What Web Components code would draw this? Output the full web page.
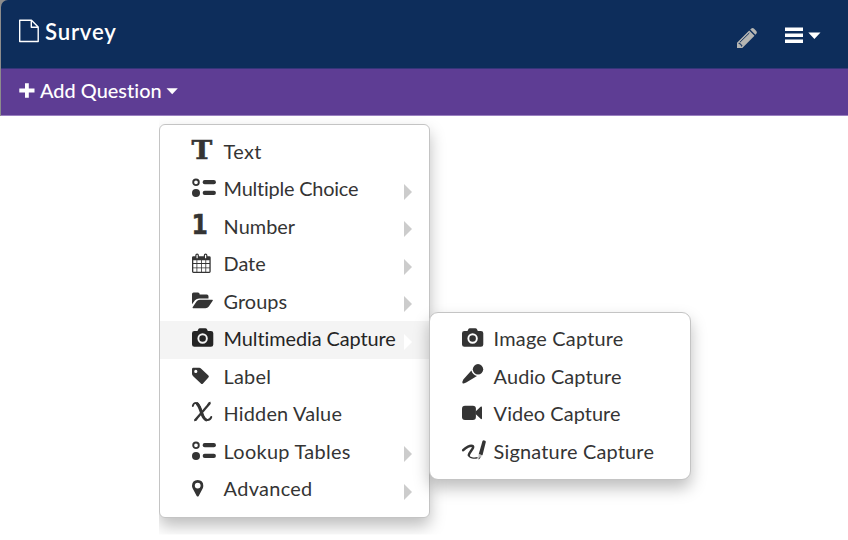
<!DOCTYPE html>
<html lang="en">
<head>
<meta charset="utf-8">
<title>Survey</title>
<style>
html,body{margin:0;height:100%;overflow:hidden;background:#fff}
body{font-family:Lato,"Open Sans",sans-serif;color:#343434}
</style>
</head>
<body>
<form-builder></form-builder>
<script>
const define = (name, html, setup) => {
  const t = document.createElement('template');
  t.innerHTML = html;
  customElements.define(name, class extends HTMLElement {
    connectedCallback() {
      if (this.shadowRoot) return;
      this.attachShadow({mode: 'open'}).append(t.content.cloneNode(true));
      if (setup) setup(this, this.shadowRoot);
    }
  });
};

const icons = {
  text: '<text x="-.4" y="25.3" font-family="DejaVu Serif" font-weight="700" font-size="26.5" stroke="currentColor" stroke-width=".5" textLength="20.8" lengthAdjust="spacingAndGlyphs">T</text>',
  one: '<text x="-.6" y="25.2" font-family="DejaVu Sans" font-weight="700" font-size="26.3" stroke="currentColor" stroke-width=".5" textLength="16.4" lengthAdjust="spacingAndGlyphs">1</text>',
  list: '<circle cx="4" cy="11.3" r="2.8" fill="none" stroke="currentColor" stroke-width="1.9"/><circle cx="4" cy="22" r="4"/><rect x="10.7" y="9" width="13.2" height="4.2" rx="2"/><rect x="10.7" y="19.8" width="13.2" height="4.2" rx="2"/>',
  date: '<path fill-rule="evenodd" d="M1.4 10.2H17.3Q18.7 10.2 18.7 11.6V25.6Q18.7 27 17.3 27H1.4Q0 27 0 25.6V11.6Q0 10.2 1.4 10.2ZM1.3 14.2V17.1H4.5V14.2ZM5.3 14.2V17.1H9V14.2ZM9.8 14.2V17.1H13.4V14.2ZM14.2 14.2V17.1H17.4V14.2ZM1.3 17.9V21.4H4.5V17.9ZM5.3 17.9V21.4H9V17.9ZM9.8 17.9V21.4H13.4V17.9ZM14.2 17.9V21.4H17.4V17.9ZM1.3 22.2V25.7H4.5V22.2ZM5.3 22.2V25.7H9V22.2ZM9.8 22.2V25.7H13.4V22.2ZM14.2 22.2V25.7H17.4V22.2Z"/><path d="M5.1 9.2V11.8M13.6 9.2V11.8" stroke="currentColor" stroke-width="3.6" stroke-linecap="round"/><path d="M5.1 9.3V11.7M13.6 9.3V11.7" stroke="#fff" stroke-width="1.2" stroke-linecap="round"/>',
  folder: '<path d="M0 22V10.1Q0 8.5 1.6 8.5H6Q7.6 8.5 7.6 10.1V10.6H14.8Q16.5 10.6 16.5 12.2V14.4H7.2Q4.7 14.4 3 16.3L0 20.3Z"/><path d="M1 24.2Q.1 24.1.8 23.1L4.5 17.6Q5.7 15.7 7.9 15.7H20.2Q21.3 15.8 20.7 16.8L16.8 22.4Q15.6 24.2 13.4 24.2Z"/>',
  camera: '<path fill-rule="evenodd" d="M2.4 9.9H5.5L6.2 8.4Q6.7 7.3 8 7.3H13.3Q14.6 7.3 15.1 8.4L15.8 9.9H18.9Q21.3 9.9 21.3 12.3V23.4Q21.3 25.7 18.9 25.7H2.4Q0 25.7 0 23.4V12.3Q0 9.9 2.4 9.9ZM10.6 12.3A5.2 5.2 0 1 0 10.6 22.7A5.2 5.2 0 1 0 10.6 12.3ZM10.6 14.2A3.3 3.3 0 1 1 10.6 20.8A3.3 3.3 0 1 1 10.6 14.2Z"/>',
  tag: '<path fill-rule="evenodd" d="M1.4 8.8H7.2Q8.3 8.8 9.2 9.7L16.4 16.5Q17.4 17.5 16.4 18.6L11 24.5Q10 25.6 8.9 24.5L1.2 17.3Q0 16.1 0 15V10.2Q0 8.8 1.4 8.8ZM3.8 10.8A1.6 1.6 0 1 0 3.8 14A1.6 1.6 0 1 0 3.8 10.8Z"/>',
  chi: '<path d="M.8 10Q1.4 6.9 4.1 6.9C7.2 7 8.3 12 9.7 16C11 20 12.4 24 15.2 24Q18.3 24.2 19.3 20.9" fill="none" stroke="currentColor" stroke-width="1.9" stroke-linecap="round"/><path d="M4.5 7.4C7.4 9 8.4 13.8 9.6 17C11 21 12.6 24 14.9 24" fill="none" stroke="currentColor" stroke-width="3"/><path d="M18 6.9L3.1 24.2" stroke="currentColor" stroke-width="2.3"/><path d="M14.9 10.4Q15.4 5.7 18.6 5.7L18.5 7.7Q17 7.6 14.9 10.4ZM6 20.7Q5.5 25.3 2 25.3L2.5 23.2Q4.6 23 6 20.7Z"/>',
  pin: '<path fill-rule="evenodd" d="M5.7 9Q11.3 9.3 11.3 14.7Q11.3 16.1 10.8 17.2L6.7 25Q5.7 26.2 4.7 25L.6 17.2Q0 16.1 0 14.7Q.2 9.3 5.7 9ZM5.7 11.7A2.9 2.9 0 1 0 5.7 17.5A2.9 2.9 0 1 0 5.7 11.7Z"/>',
  mic: '<circle cx="16" cy="10.3" r="5.2"/><path d="M9.4 11.6Q10.6 16 15 17L4.2 23.6L1.7 24.6Q.2 24.7.3 23.1L1.3 20.5Z"/>',
  video: '<rect y="9.7" width="13.9" height="14.2" rx="3"/><path d="M13.6 15.6L18.6 10.8Q20 9.9 20 11.4V22.2Q20 23.7 18.6 22.8L13.6 18Z"/>',
  sign: '<path d="M1.2 16.2C4 13.1 8.3 11.3 10.3 12C13.4 13.4 7 18 6.8 21.2" fill="none" stroke="currentColor" stroke-width="2.5" stroke-linecap="round"/><path d="M6.8 21C7 24.2 12.4 24.7 15.6 23.7" fill="none" stroke="currentColor" stroke-width="1.3"/><path d="M20.5 7.1Q21 6.1 22.4 6.4Q24 6.8 23.8 7.9L20.5 21.2L16.7 20.3Z"/><path d="M16.7 20.3L20.2 21.2L17.4 25.2L16.2 24.7Z" fill="#bbb"/><path d="M16.6 24.9L18.3 23.5" stroke="currentColor"/>'
};

/* A text whose tracking is set so that it takes the width given in its attribute */
define('fit-label', `<style>
:host{display:block;white-space:nowrap}
span{display:inline-block}
</style><span><slot></slot></span>`, (el, root) => {
  const s = root.querySelector('span');
  s.style.letterSpacing = (el.getAttribute('width') - s.getBoundingClientRect().width) / el.textContent.length + 'px';
});

define('menu-item', `<style>
:host{display:flex;height:37.5px;padding:0 17px 0 32px;box-sizing:border-box;font-size:19.9px;line-height:34px}
:host([active]){background:#f4f4f4;color:#242424}
svg{width:31.6px;height:37.5px;flex:none;overflow:visible;fill:currentColor}
i{display:none;margin:12.6px 0 0 auto;width:0;height:0;border:8px solid transparent;border-left-color:#ccc;border-right:0}
:host([sub]) i{display:block}
:host([active]) i{border-left-color:#fff}
</style><svg viewBox="0 0 31.6 37.5"></svg><fit-label></fit-label><i></i>`, (el, root) => {
  root.querySelector('svg').innerHTML = icons[el.getAttribute('icon')];
  const label = document.createElement('fit-label');
  label.setAttribute('width', el.getAttribute('width'));
  label.textContent = el.getAttribute('label');
  root.querySelector('fit-label').replaceWith(label);
});
const item = (icon, label, width, flags = '') => `<menu-item icon="${icon}" label="${label}" width="${width}" ${flags}></menu-item>`;

define('menu-panel', `<style>
:host{display:block;box-sizing:border-box;background:#fff;border:1px solid #c4c4c4;padding:8.5px 0;border-radius:6px;box-shadow:0 8px 16px rgba(0,0,0,.26)}
</style><slot></slot>`);

define('title-bar', `<style>
:host{display:flex;height:69px;box-sizing:border-box;padding:0 28px 0 17px;background:#0d2d5b;color:#fff;font-size:22.2px;font-weight:600;line-height:64px;border-top-left-radius:7px;border-bottom:1px solid #35357a}
.file{width:27px}.pen{width:48px;margin-left:auto}.bars{width:36px}
svg{height:67px;flex:none;overflow:visible}
</style>
<svg class="file" viewBox="0 0 27 67"><path d="M1.7 20.3H13.5L20.2 27V41.5H1.7ZM13.3 20.5V27.2H20" fill="none" stroke="#fff" stroke-width="1.4" stroke-linejoin="round"/></svg>
<fit-label width="71.5">Survey</fit-label>
<svg class="pen" viewBox="736 0 48 67"><path fill="#b5b5b2" d="M737 42.7L749.2 30.5L754.5 35.8L742.3 48H737ZM750.2 29.5L751.4 28.4Q752.7 27.6 753.9 28.6L756.5 31.2Q757.3 32.4 756.5 33.6L755.4 34.8Z"/><path d="M740 42.2L749.3 33M738.6 43.4L740 43.2L740.3 44.8L741.9 45L741.5 46.5" fill="none" stroke="#0d2d5b" stroke-width="1"/></svg>
<svg class="bars" viewBox="784 0 36 67"><path fill="#fff" d="M785 27.6H803V30.9H785ZM785 33.6H803V36.9H785ZM785 39.6H803V42.9H785ZM808.3 32.4H820.5L814.4 39.1Z"/></svg>`);

define('tool-bar', `<style>
:host{display:flex;height:47px;box-sizing:border-box;padding-left:17px;background:#5e3d94;color:#fff;font-size:19.9px;font-weight:500;line-height:43px;border-bottom:1px solid #9a80c0}
svg{height:46px;flex:none;overflow:visible;fill:#fff}
.plus{width:22px}.caret{width:20px}
</style>
<svg class="plus" viewBox="18 69 22 46"><path d="M25 83.2H28.8V88.5H34.5V92.4H28.8V97.8H25V92.4H19.3V88.5H25Z"/></svg>
<fit-label width="122">Add Question</fit-label>
<svg class="caret" viewBox="162 69 20 46"><path d="M166.5 88.3H177.8L172.2 94.3Z"/></svg>`);

define('form-builder', `<style>
:host{display:block;width:848px;height:540px;position:relative;overflow:hidden}
header{padding-left:1px;background:#8c8c8c}
.main,.sub{position:absolute}
.main{left:159px;top:124px;width:271px;height:393.5px;clip-path:inset(-20px -50px -17px 0)}
.sub{left:429px;top:312px;width:261.5px;height:167.5px;padding:8px 0;border-radius:9px}
</style>
<header><title-bar></title-bar><tool-bar></tool-bar></header>
<menu-panel class="main">
${item('text','Text',38)}
${item('list','Multiple Choice',135,'sub')}
${item('one','Number',71.5,'sub')}
${item('date','Date',42,'sub')}
${item('folder','Groups',63.5,'sub')}
${item('camera','Multimedia Capture',172.5,'sub active')}
${item('tag','Label',47.5)}
${item('chi','Hidden Value',118.5)}
${item('list','Lookup Tables',127,'sub')}
${item('pin','Advanced',89,'sub')}
</menu-panel>
<menu-panel class="sub">
${item('camera','Image Capture',130)}
${item('mic','Audio Capture',128)}
${item('video','Video Capture',127)}
${item('sign','Signature Capture',160.5)}
</menu-panel>`);
</script>
</body>
</html>
